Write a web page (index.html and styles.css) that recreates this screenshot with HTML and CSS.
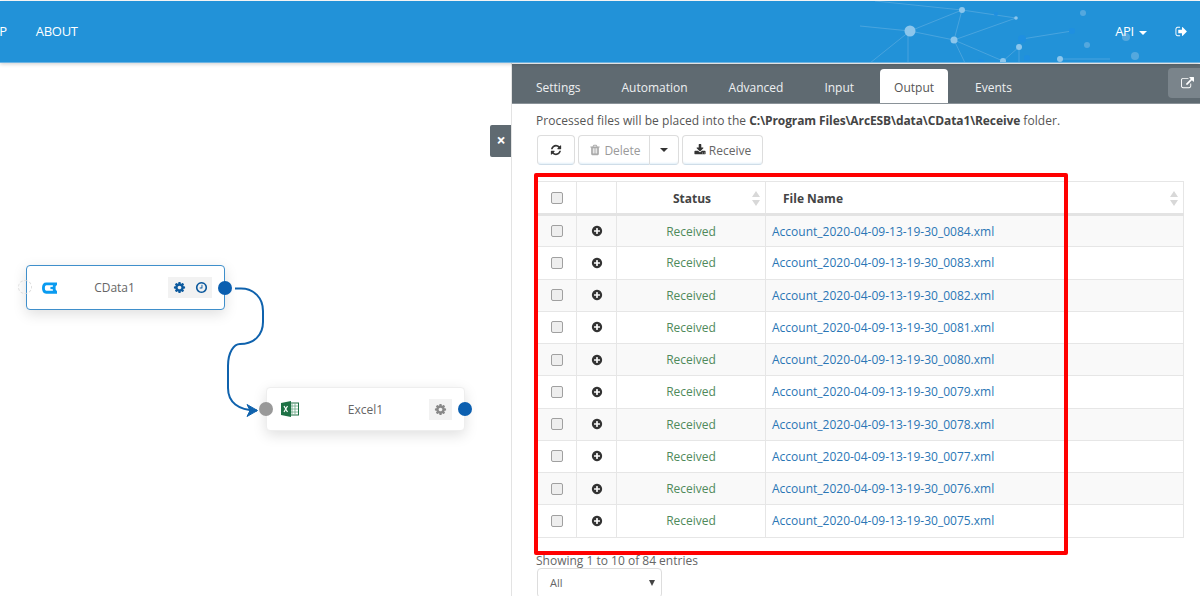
FILE: index.html
```html
<!DOCTYPE html>
<html lang="en">
<head>
<meta charset="utf-8">
<title>ArcESB Flows</title>
<link rel="stylesheet" href="styles.css">
</head>
<body>
<svg class="defs" width="0" height="0" aria-hidden="true">
  <symbol id="i-cog" viewBox="0 0 1792 1792"><path d="M1152 896q0-106-75-181t-181-75-181 75-75 181 75 181 181 75 181-75 75-181zm512-109v222q0 12-8 23t-20 13l-185 28q-19 54-39 91 35 50 107 138 10 12 10 25t-9 23q-27 37-99 108t-94 71q-12 0-26-9l-138-108q-44 23-91 38-16 136-29 186-7 28-36 28h-222q-14 0-24.500-8.500t-11.500-21.500l-28-184q-49-16-90-37l-141 107q-10 9-25 9-14 0-25-11-126-114-165-168-7-10-7-23 0-12 8-23 15-21 51-66.500t54-70.500q-27-50-41-99l-183-27q-13-2-21-12.500t-8-23.500v-222q0-12 8-23t19-13l186-28q14-46 39-92-40-57-107-138-10-12-10-24 0-10 9-23 26-36 98.500-107.500t94.500-71.500q13 0 26 10l138 107q44-23 91-38 16-136 29-186 7-28 36-28h222q14 0 24.500 8.500t11.500 21.500l28 184q49 16 90 37l142-107q9-9 24-9 13 0 25 10 129 119 165 170 7 8 7 22 0 12-8 23-15 21-51 66.500t-54 70.500q26 50 41 98l183 28q13 2 21 12.500t8 23.500z"/></symbol>
  <symbol id="i-plus" viewBox="0 0 1792 1792"><path d="M1344 960v-128q0-26-19-45t-45-19h-256v-256q0-26-19-45t-45-19h-128q-26 0-45 19t-19 45v256h-256q-26 0-45 19t-19 45v128q0 26 19 45t45 19h256v256q0 26 19 45t45 19h128q26 0 45-19t19-45v-256h256q26 0 45-19t19-45zm320-64q0 209-103 385.500t-279.500 279.500-385.500 103-385.500-103-279.500-279.500-103-385.500 103-385.500 279.500-279.500 385.500-103 385.500 103 279.500 279.500 103 385.500z"/></symbol>
  <symbol id="i-refresh" viewBox="0 0 1792 1792"><path d="M1639 1056q0 5-1 7-64 268-268 434.500t-478 166.500q-146 0-282.500-55t-243.500-157l-129 129q-19 19-45 19t-45-19-19-45v-448q0-26 19-45t45-19h448q26 0 45 19t19 45-19 45l-137 137q71 66 161 102t187 36q134 0 250-65t186-179q11-17 53-117 8-23 30-23h192q13 0 22.500 9.500t9.500 22.500zm25-800v448q0 26-19 45t-45 19h-448q-26 0-45-19t-19-45 19-45l138-138q-148-137-349-137-134 0-250 65t-186 179q-11 17-53 117-8 23-30 23h-199q-13 0-22.500-9.500t-9.500-22.500v-7q65-268 270-434.500t480-166.500q146 0 284 55.500t245 156.500l130-129q19-19 45-19t45 19 19 45z"/></symbol>
  <symbol id="i-trash" viewBox="0 0 1792 1792"><path d="M704 1376v-704q0-14-9-23t-23-9h-64q-14 0-23 9t-9 23v704q0 14 9 23t23 9h64q14 0 23-9t9-23zm256 0v-704q0-14-9-23t-23-9h-64q-14 0-23 9t-9 23v704q0 14 9 23t23 9h64q14 0 23-9t9-23zm256 0v-704q0-14-9-23t-23-9h-64q-14 0-23 9t-9 23v704q0 14 9 23t23 9h64q14 0 23-9t9-23zm-544-992h448l-48-117q-7-9-17-11h-317q-10 2-17 11zm928 32v64q0 14-9 23t-23 9h-96v948q0 83-47 143.500t-113 60.500h-832q-66 0-113-58.500t-47-141.500v-952h-96q-14 0-23-9t-9-23v-64q0-14 9-23t23-9h309l70-167q15-37 54-63t79-26h320q40 0 79 26t54 63l70 167h309q14 0 23 9t9 23z"/></symbol>
  <symbol id="i-download" viewBox="0 0 1792 1792"><path d="M1344 1344q0-26-19-45t-45-19-45 19-19 45 19 45 45 19 45-19 19-45zm256 0q0-26-19-45t-45-19-45 19-19 45 19 45 45 19 45-19 19-45zm128-224v320q0 40-28 68t-68 28h-1472q-40 0-68-28t-28-68v-320q0-40 28-68t68-28h465l135 136q58 56 136 56t136-56l136-136h464q40 0 68 28t28 68zm-325-569q17 41-14 70l-448 448q-18 19-45 19t-45-19l-448-448q-31-29-14-70 17-39 59-39h256v-448q0-26 19-45t45-19h256q26 0 45 19t19 45v448h256q42 0 59 39z"/></symbol>
  <symbol id="i-signout" viewBox="0 0 1792 1792"><path d="M704 1440q0 4 1 20t.5 26.500-3 23.500-10 19.500-20.500 6.500h-320q-119 0-203.500-84.500t-84.500-203.500v-704q0-119 84.500-203.500t203.500-84.500h320q13 0 22.500 9.500t9.500 22.500q0 4 1 20t.5 26.500-3 23.500-10 19.500-20.500 6.500h-320q-66 0-113 47t-47 113v704q0 66 47 113t113 47h312l11.500 1 11.500 3 8 5.500 7 9 2 13.500zm928-544q0 26-19 45l-544 544q-19 19-45 19t-45-19-19-45v-288h-448q-26 0-45-19t-19-45v-384q0-26 19-45t45-19h448v-288q0-26 19-45t45-19 45 19l544 544q19 19 19 45z"/></symbol>
  <symbol id="i-external" viewBox="0 0 1792 1792"><path d="M1408 928v320q0 119-84.500 203.500t-203.500 84.500h-832q-119 0-203.500-84.500t-84.500-203.500v-832q0-119 84.500-203.500t203.500-84.500h704q14 0 23 9t9 23v64q0 14-9 23t-23 9h-704q-66 0-113 47t-47 113v832q0 66 47 113t113 47h832q66 0 113-47t47-113v-320q0-14 9-23t23-9h64q14 0 23 9t9 23zm384-864v512q0 26-19 45t-45 19-45-19l-176-176-652 652q-10 10-23 10t-23-10l-114-114q-10-10-10-23t10-23l652-652-176-176q-19-19-19-45t19-45 45-19h512q26 0 45 19t19 45z"/></symbol>
  <symbol id="i-clock" viewBox="0 0 1792 1792"><path d="M1024 544v448q0 14-9 23t-23 9h-320q-14 0-23-9t-9-23v-64q0-14 9-23t23-9h224v-352q0-14 9-23t23-9h64q14 0 23 9t9 23zm416 352q0-148-73-273t-198-198-273-73-273 73-198 198-73 273 73 273 198 198 273 73 273-73 198-198 73-273zm224 0q0 209-103 385.500t-279.500 279.500-385.500 103-385.500-103-279.500-279.500-103-385.500 103-385.500 279.500-279.500 385.500-103 385.500 103 279.500 279.500 103 385.500z"/></symbol>
</svg>

<header class="topbar">
  <svg class="network" viewBox="0 0 400 62" width="400" height="62" aria-hidden="true">
    <g stroke="#6fb5e4" stroke-width="1" opacity=".5" fill="none">
      <path d="M110 30L162 9L216 17M162 9L154 39L216 17M110 30L154 39L203 60M110 30L70 62M108 30V62M110 30L60 25M154 39L165 62M222 38L272 30M75 0L162 9M219 46L203 60M219 46V62M260 58H310"/>
    </g>
    <g fill="#8cc6ec">
      <circle cx="110" cy="30" r="5.500"/><circle cx="162" cy="9" r="3"/><circle cx="216" cy="17" r="1.800"/><circle cx="154" cy="39" r="3.500"/><circle cx="219" cy="46" r="3"/><circle cx="203" cy="60" r="3"/><circle cx="260" cy="58" r="3"/>
    </g>
    <g fill="#1f8fe0">
      <circle cx="196" cy="13" r="2"/><circle cx="222" cy="38" r="4"/><circle cx="272" cy="30" r="3"/><circle cx="227" cy="57" r="3"/><circle cx="181" cy="61" r="3"/>
    </g>
    <g fill="#54a8de"><circle cx="283" cy="12" r="3"/><circle cx="287" cy="44" r="3"/><circle cx="326" cy="36" r="4"/><circle cx="335" cy="55" r="4"/></g>
  </svg>
  <nav class="nav-left">
    <a class="nav-link nav-cut">MAP</a>
    <a class="nav-link">ABOUT</a>
  </nav>
  <nav class="nav-right">
    <a class="nav-link api">API <span class="caret caret-white"></span></a>
    <svg class="icon signout"><use href="#i-signout"/></svg>
  </nav>
</header>

<main class="workspace">
  <section class="canvas">
    <svg class="wires" width="511" height="531" aria-hidden="true">
      <path d="M235 224.500H241C254 224.500 263 234 263 247V258C263 271 254 280 240 280C234 280 228 288 228 302V324C228 338 238 346.500 257 346.500" fill="none" stroke="#0f62ad" stroke-width="2"/>
      <path d="M247 340.500L257.500 346.500L247 352.500L250 346.500Z" fill="#0f62ad" stroke="#0f62ad" stroke-width="1"/>
    </svg>

    <span class="port port-ghost port-a-in"></span>
    <article class="node node-a">
      <svg class="cdata" width="15" height="12" viewBox="0 0 16 12" aria-hidden="true"><path d="M15 1.500H4.500C2.500 1.500 1.500 3 1.500 6S2.500 10.500 4.500 10.500H15L13 8V4Z" fill="none" stroke="#0a9bf0" stroke-width="3"/><path d="M9 4.800H12V7.200H9Z" fill="#0a9bf0"/></svg>
      <span class="node-name node-name-a">CData1</span>
      <span class="node-tools">
        <span class="tool"><svg class="icon tool-icon"><use href="#i-cog"/></svg></span><span class="tool"><svg class="icon tool-icon"><use href="#i-clock"/></svg></span>
      </span>
    </article>
    <span class="port port-out port-a-out"></span>

    <span class="port port-in port-b-in"></span>
    <article class="node node-b">
      <svg class="excel" width="18" height="16" viewBox="0 0 18 16" aria-hidden="true"><rect x="8" y="2" width="9.500" height="12" fill="#fff" stroke="#1e7145"/><path d="M11 2.500V13.500M14 2.500V13.500M8.500 5H17M8.500 8H17M8.500 11H17" stroke="#6aa886" stroke-width=".8"/><path d="M0 2L10 0V16L0 14Z" fill="#1e7145"/><path d="M3 5L6.500 11M6.500 5L3 11" stroke="#fff" stroke-width="1.200" fill="none"/></svg>
      <span class="node-name node-name-b">Excel1</span>
      <span class="node-tools">
        <span class="tool tool-grey"><svg class="icon tool-icon"><use href="#i-cog"/></svg></span>
      </span>
    </article>
    <span class="port port-out port-b-out"></span>

    <button class="close-panel" type="button">×</button>
  </section>

  <section class="panel">
    <div class="tabs">
      <span class="tab">Settings</span>
      <span class="tab">Automation</span>
      <span class="tab">Advanced</span>
      <span class="tab">Input</span>
      <span class="tab tab-active">Output</span>
      <span class="tab">Events</span>
      <span class="popout"><svg class="icon popout-icon"><use href="#i-external"/></svg></span>
    </div>
    <p class="notice">Processed files will be placed into the <b>C:\Program Files\ArcESB\data\CData1\Receive</b> folder.</p>
    <div class="toolbar">
      <button class="btn btn-refresh" type="button"><svg class="icon btn-icon dark"><use href="#i-refresh"/></svg></button>
      <span class="btn-group">
        <button class="btn btn-delete" type="button"><svg class="icon btn-icon muted"><use href="#i-trash"/></svg>Delete</button>
        <button class="btn btn-split" type="button"><span class="caret"></span></button>
      </span>
      <button class="btn btn-receive" type="button"><svg class="icon btn-icon dark"><use href="#i-download"/></svg>Receive</button>
    </div>

    <table class="files">
      <colgroup><col class="c-check"><col class="c-expand"><col class="c-status"><col></colgroup>
      <thead>
        <tr>
          <th><span class="check"></span></th>
          <th></th>
          <th class="sortable"><span class="th-status">Status</span><span class="sort"></span></th>
          <th class="sortable name-head"><span>File Name</span><span class="sort"></span></th>
        </tr>
      </thead>
      <tbody>
        <tr><td><span class="check"></span></td><td><svg class="icon expand"><use href="#i-plus"/></svg></td><td class="status">Received</td><td class="fname">Account_2020-04-09-13-19-30_0084.xml</td></tr>
        <tr><td><span class="check"></span></td><td><svg class="icon expand"><use href="#i-plus"/></svg></td><td class="status">Received</td><td class="fname">Account_2020-04-09-13-19-30_0083.xml</td></tr>
        <tr><td><span class="check"></span></td><td><svg class="icon expand"><use href="#i-plus"/></svg></td><td class="status">Received</td><td class="fname">Account_2020-04-09-13-19-30_0082.xml</td></tr>
        <tr><td><span class="check"></span></td><td><svg class="icon expand"><use href="#i-plus"/></svg></td><td class="status">Received</td><td class="fname">Account_2020-04-09-13-19-30_0081.xml</td></tr>
        <tr><td><span class="check"></span></td><td><svg class="icon expand"><use href="#i-plus"/></svg></td><td class="status">Received</td><td class="fname">Account_2020-04-09-13-19-30_0080.xml</td></tr>
        <tr><td><span class="check"></span></td><td><svg class="icon expand"><use href="#i-plus"/></svg></td><td class="status">Received</td><td class="fname">Account_2020-04-09-13-19-30_0079.xml</td></tr>
        <tr><td><span class="check"></span></td><td><svg class="icon expand"><use href="#i-plus"/></svg></td><td class="status">Received</td><td class="fname">Account_2020-04-09-13-19-30_0078.xml</td></tr>
        <tr><td><span class="check"></span></td><td><svg class="icon expand"><use href="#i-plus"/></svg></td><td class="status">Received</td><td class="fname">Account_2020-04-09-13-19-30_0077.xml</td></tr>
        <tr><td><span class="check"></span></td><td><svg class="icon expand"><use href="#i-plus"/></svg></td><td class="status">Received</td><td class="fname">Account_2020-04-09-13-19-30_0076.xml</td></tr>
        <tr><td><span class="check"></span></td><td><svg class="icon expand"><use href="#i-plus"/></svg></td><td class="status">Received</td><td class="fname">Account_2020-04-09-13-19-30_0075.xml</td></tr>
      </tbody>
    </table>

    <p class="entries">Showing 1 to 10 of 84 entries</p>
    <div class="page-size"><span>All</span><span class="select-arrow"></span></div>
    <div class="highlight"></div>
  </section>
</main>
</body>
</html>
```
FILE: styles.css
```css
* { box-sizing: border-box; }
html, body { margin: 0; padding: 0; height: 596px; overflow: hidden; background: #fff; }
body { font-family: "Open Sans", "Noto Sans", sans-serif; font-size: 12px; color: #555; display: flex; flex-direction: column; }
.defs { position: absolute; }
.icon { display: inline-block; fill: currentColor; }

.topbar { position: relative; z-index: 2; flex: none; height: 62px; margin-top: 1px; background: #2292d8; border-bottom: 1px solid #6db4e3; box-shadow: 0 1px 4px rgba(0,0,0,.2); display: flex; justify-content: space-between; align-items: center; overflow: hidden; color: #fff; }
.network { position: absolute; left: 800px; top: 0; }
.nav-left, .nav-right { position: relative; display: flex; align-items: center; height: 100%; }
.nav-left { gap: 29px; margin-left: -20px; padding-bottom: 1px; }
.nav-link { font-size: 13px; color: #fff; letter-spacing: -.3px; }
.nav-right { padding-bottom: 1px; padding-right: 12px; }
.api { margin-right: 28px; }
.signout { width: 13px; height: 13px; }
.caret { display: inline-block; width: 0; height: 0; border-left: 4px solid transparent; border-right: 4px solid transparent; border-top: 4px solid #333; vertical-align: middle; }
.caret-white { border-top-color: #fff; margin-left: 2px; }

.workspace { position: relative; flex: 1; display: flex; min-height: 0; }
.canvas { position: relative; flex: none; width: 511px; height: 100%; }
.wires { position: absolute; left: 0; top: 1px; }
.node { position: absolute; width: 199px; height: 45px; display: flex; align-items: center; background: #fff; border-radius: 4px; box-shadow: 0 4px 14px rgba(0,0,0,.13); }
.node-a { left: 26px; top: 202px; border: 1px solid #3f8fcb; padding: 0 12px 0 15px; }
.node-b { left: 266px; top: 324px; height: 44px; border: 1px solid #eee; padding: 0 12px 0 14px; }
.node-name { flex: 1; text-align: center; color: #666; font-size: 12px; }
.node-name-a { padding-left: 4px; }
.node-name-b { padding-left: 3px; }
.node-tools { display: flex; gap: 0; }
.tool { display: flex; align-items: center; justify-content: center; width: 22px; height: 21px; background: #f2f2f2; color: #0d5a9e; }
.tool-grey { width: 23px; color: #888; }
.tool-icon { width: 13px; height: 13px; }
.port { position: absolute; width: 14px; height: 14px; border-radius: 50%; z-index: 1; }
.port-out { background: #0b5fb0; }
.port-in { background: #999; }
.port-ghost { width: 14px; height: 14px; border: 1px dashed #ddd; }
.port-a-in { left: 18px; top: 217px; }
.port-a-out { left: 218px; top: 218px; }
.port-b-in { left: 259px; top: 339px; }
.port-b-out { left: 458px; top: 339px; }
.close-panel { position: absolute; left: 490px; top: 62px; width: 22px; height: 32px; padding: 0 0 2px; border: 0; border-radius: 2px 0 0 2px; background: #5f6a71; color: #fff; font: bold 16px "Open Sans", sans-serif; }

.panel { position: relative; flex: 1; min-width: 0; border-left: 1px solid #e3e3e3; }
.tabs { height: 40px; margin-top: 1px; background: #5f6a71; display: flex; align-items: flex-end; padding-left: 24px; position: relative; border-bottom: 1px solid #8a9298; }
.tab { height: 34px; padding-top: 10px; color: #eef0f1; font-size: 12px; margin-right: 41px; }
.tab-active { background: #fff; color: #555; border-radius: 4px 4px 0 0; width: 68px; text-align: center; margin: 0 27px 0 -15px; }
.popout { position: absolute; right: 0; top: 4px; width: 32px; height: 30px; padding-left: 6px; background: #7a848b; border-radius: 4px 0 0 4px; display: flex; align-items: center; justify-content: center; color: #fff; }
.popout-icon { width: 13px; height: 13px; }

.notice { margin: 8px 0 0 24px; height: 17px; line-height: 17px; font-size: 12px; color: #555; white-space: nowrap; letter-spacing: .05px; }
.notice b { color: #444; letter-spacing: -.1px; }
.toolbar { margin: 6px 0 0 25px; display: flex; gap: 3px; height: 30px; }
.btn-group { display: flex; }
.btn { height: 30px; border: 1px solid #ddd; border-bottom-color: #cfdde8; border-radius: 4px; background: #fff; color: #666; font: 12px "Open Sans", sans-serif; padding: 0; display: flex; align-items: center; justify-content: center; gap: 3px; box-shadow: inset 0 -2px 2px -1px #e3f0f9; }
.btn-refresh { width: 38px; }
.btn-delete { width: 72px; padding-left: 2px; border-radius: 4px 0 0 4px; color: #9a9a9a; }
.btn-split { width: 29px; border-left: 0; border-radius: 0 4px 4px 0; }
.btn-receive { width: 81px; }
.btn-icon { width: 12px; height: 12px; }
.dark { color: #333; }
.muted { color: #aaa; }

.files { margin: 16px 0 0 25px; width: 647px; border-collapse: collapse; table-layout: fixed; border-top: 1px solid #e6e6e6; border-right: 1px solid #e6e6e6; }
.c-check { width: 39px; }
.c-expand { width: 40px; }
.c-status { width: 149px; }
.files th { height: 33px; border: 1px solid #e6e6e6; border-bottom: 3px solid #e3e3e3; text-align: center; font-size: 12px; font-weight: 700; color: #444; position: relative; padding: 0; }
.files .sortable { padding-top: 2px; }
.files td { height: 32.25px; border: 1px solid #e6e6e6; text-align: center; padding: 0; }
.files tbody tr:nth-child(odd) { background: #f9f9f9; }
.th-status { margin-left: 2px; }
.name-head { text-align: left !important; padding-left: 17px !important; }
.sort { position: absolute; right: 5px; top: 9px; width: 8px; height: 15px; }
.sort::before, .sort::after { content: ""; position: absolute; left: 0; border-left: 4px solid transparent; border-right: 4px solid transparent; }
.sort::before { top: 0; border-bottom: 6px solid #d8d8d8; }
.sort::after { bottom: 0; border-top: 6px solid #d8d8d8; }
.check { display: block; width: 12px; height: 12px; margin: 0 auto; border: 1px solid #a0a0a0; border-radius: 2px; background: #eee; }
.expand { display: block; width: 12px; height: 12px; margin: 0 auto; color: #333; }
.status { color: #4f8a5b; }
.files .fname { text-align: left; padding-left: 6px; color: #2a76b5; }

.entries { margin: 14px 0 0 24px; height: 17px; line-height: 17px; color: #666; }
.page-size { margin: -1px 0 0 25px; width: 125px; height: 30px; border: 1px solid #ddd; border-radius: 4px; padding: 0 6px 0 12px; display: flex; align-items: center; justify-content: space-between; color: #666; font-size: 11px; }
.select-arrow { width: 0; height: 0; border-left: 3.500px solid transparent; border-right: 3.500px solid transparent; border-top: 6px solid #444; }
.highlight { position: absolute; left: 22px; top: 110px; width: 534px; height: 382px; border: 4px solid #f00; border-radius: 2px; pointer-events: none; }
```
